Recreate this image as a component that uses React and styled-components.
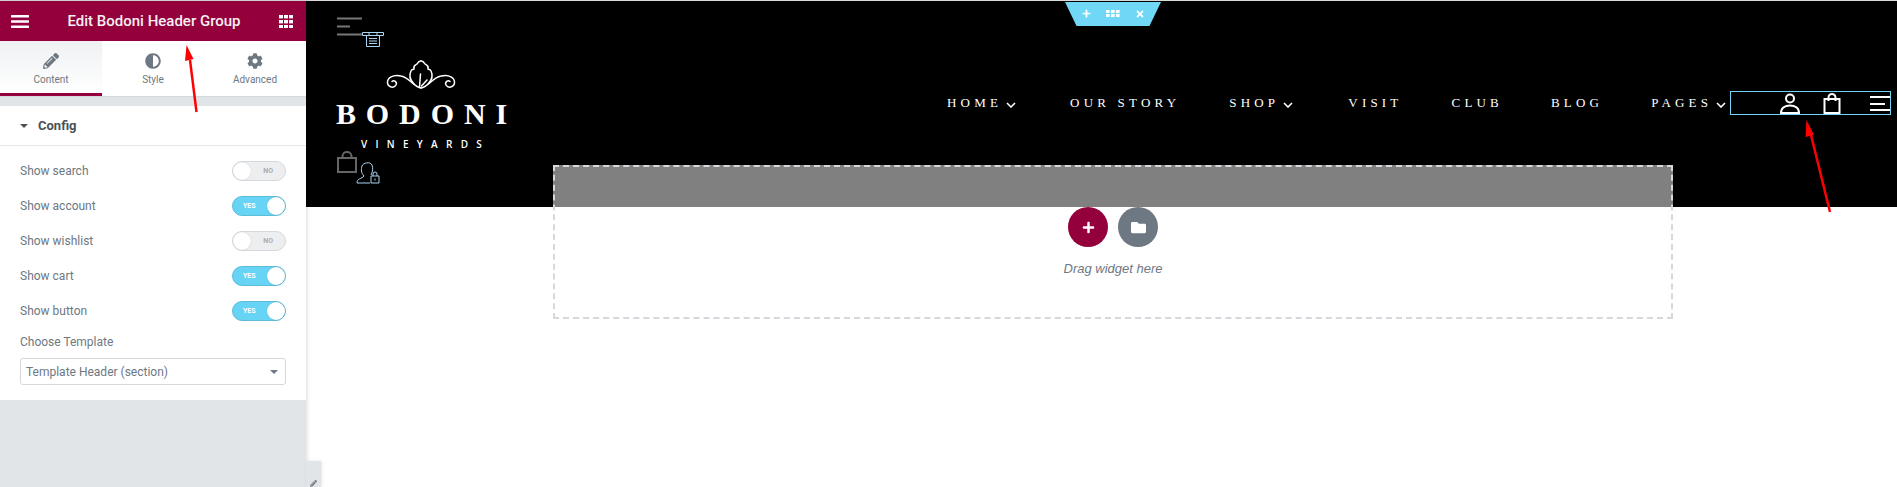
import styled, { createGlobalStyle } from 'styled-components'
import { FaAdjust, FaCog, FaFolder, FaPencilAlt, FaPlus, FaTimes } from 'react-icons/fa'

const EstiloGlobal = createGlobalStyle`
  html, body {
    margin: 0;
    height: 100%;
    overflow: hidden;
    background: #fff;
  }

  * {
    box-sizing: border-box;
  }
`

const Pagina = styled.div`
  position: relative;
  display: flex;
  height: 100vh;
  border-top: 1px solid #d8dadc;
  font-family: Roboto, "Liberation Sans", sans-serif;
`

/* painel lateral */
const Painel = styled.aside`
  position: relative;
  z-index: 3;
  flex: 0 0 306px;
  display: flex;
  flex-direction: column;
  background: #e2e5e8;
  box-shadow: 1px 0 4px rgba(0, 0, 0, .14);
`

const PainelTopo = styled.header`
  height: 40px;
  flex: none;
  display: flex;
  align-items: center;
  justify-content: space-between;
  padding: 0 13px 0 11px;
  background: #93003c;
  color: #fff;

  & > h1 {
    margin: 0;
    font-size: 15px;
    font-weight: 500;
    color: #f5f0f2;
  }
`

const Abas = styled.nav`
  height: 55px;
  flex: none;
  display: grid;
  grid-template-columns: repeat(3, 102px);
  background: #fff;
`

const Aba = styled.div`
  display: flex;
  flex-direction: column;
  align-items: center;
  padding-top: 12px;
  gap: 5px;
  font-size: 10px;
  color: #6d7882;
  background: ${props => props.$ativa ? 'linear-gradient(to bottom, #eff1f3, #fff)' : '#fff'};
  border-bottom: ${props => props.$ativa ? '3px solid #93003c' : '0'};
  box-shadow: 0 1px 1px rgba(0, 0, 0, .05);

  & > svg {
    height: 16px;
    width: 16px;
  }
`

const Secao = styled.section`
  margin-top: 10px;
  padding-bottom: 15px;
  flex: none;
  background: #fff;
`

const SecaoTitulo = styled.div`
  height: 40px;
  display: flex;
  align-items: center;
  gap: 10px;
  padding-left: 20px;
  border-bottom: 1px solid #e6e9ec;
  font-size: 13px;
  font-weight: 700;
  color: #495157;

  &::before {
    content: "";
    border-top: 4px solid #495157;
    border-left: 4px solid transparent;
    border-right: 4px solid transparent;
  }
`

const Campos = styled.div`
  padding: 7px 20px 0;
`

const Linha = styled.div`
  height: 35px;
  display: flex;
  align-items: center;
  justify-content: space-between;
  font-size: 12px;
  color: #6d7882;
`

const Chave = styled.span`
  position: relative;
  width: 54px;
  height: 20px;
  display: flex;
  align-items: center;
  justify-content: ${props => props.$ligada ? 'flex-start' : 'flex-end'};
  padding: ${props => props.$ligada ? '0 0 0 10px' : '0 12px 0 0'};
  border-radius: 10px;
  border: 1px solid ${props => props.$ligada ? '#5fbcd9' : '#d5d8dc'};
  background: ${props => props.$ligada ? '#67d3f5' : '#eceeef'};
  font-size: 7px;
  font-weight: 700;
  color: ${props => props.$ligada ? '#fff' : '#a4afb7'};

  &::after {
    content: "";
    position: absolute;
    top: 0;
    bottom: 0;
    width: 18px;
    border-radius: 50%;
    background: #fff;
    box-shadow: 0 0 1px rgba(0, 0, 0, .25);
    ${props => props.$ligada ? 'right: 0;' : 'left: 0;'}
  }
`

const Rotulo = styled.div`
  margin-top: 7px;
  font-size: 12px;
  line-height: 14px;
  color: #6d7882;
`

const Seletor = styled.div`
  height: 27px;
  margin-top: 9px;
  display: flex;
  align-items: center;
  justify-content: space-between;
  padding: 0 7px 0 5px;
  border: 1px solid #d5d8dc;
  border-radius: 3px;
  font-size: 12px;
  color: #6d7882;

  &::after {
    content: "";
    border-top: 4px solid #6d7882;
    border-left: 4px solid transparent;
    border-right: 4px solid transparent;
  }
`

const Recolher = styled.div`
  position: absolute;
  left: 306px;
  bottom: 0;
  width: 15px;
  height: 26px;
  background: #e2e5e8;
  box-shadow: 1px 0 3px rgba(0, 0, 0, .1);
  color: #6d7882;
  display: flex;
  justify-content: center;
  align-items: flex-end;
`

/* area do site */
const Tela = styled.main`
  flex: 1;
  min-width: 0;
`

const Cabecalho = styled.div`
  height: 206px;
  display: flex;
  padding-left: 31px;
  background: #000;
`

const ColunaLogo = styled.div`
  width: 610px;
  flex: none;
  padding-top: 16px;
`

const Marca = styled.div`
  margin-top: 12px;
  width: 172px;
  display: flex;
  flex-direction: column;
  align-items: center;
  color: #fff;

  & > svg {
    margin-right: 5px;
  }
`

const MarcaNome = styled.div`
  margin-top: 11px;
  margin-right: -7px;
  font-family: "Liberation Serif", serif;
  font-weight: 700;
  font-size: 30px;
  line-height: 28px;
  letter-spacing: 9.9px;
  white-space: nowrap;
`

const MarcaSub = styled.div`
  margin-top: 9px;
  margin-right: -5px;
  font-family: "Open Sans", sans-serif;
  font-size: 10px;
  font-weight: 600;
  line-height: 14px;
  letter-spacing: 8.3px;
  white-space: nowrap;
`

const LinhaIcones = styled.div`
  display: flex;
  align-items: flex-end;
`

const Menu = styled.nav`
  flex: 1;
  min-width: 0;
  height: 24px;
  margin-top: 90px;
  display: flex;
  align-items: center;
`

const ItemMenu = styled.a`
  flex: none;
  display: flex;
  align-items: center;
  margin-right: ${props => props.$recuo}px;
  font-family: "Liberation Serif", serif;
  font-size: 13px;
  letter-spacing: 4.2px;
  color: #fff;
  white-space: nowrap;

  & > svg {
    margin: 4px 0 0 4px;
  }
`

const CaixaIcones = styled.div`
  flex: none;
  width: 161px;
  height: 24px;
  margin-left: auto;
  margin-right: 6px;
  display: flex;
  align-items: flex-end;
  justify-content: flex-end;
  gap: 29px;
  border: 1px solid #71d7f7;

  & > svg:first-child {
    margin-right: -6px;
  }
`

const Hamburguer = styled.span`
  display: flex;
  flex-direction: column;
  align-items: flex-start;
  gap: 4.5px;
  margin-bottom: 3px;

  & > i {
    display: block;
    height: 2px;
    width: ${props => props.$largura}px;
    background: #fff;
  }

  & > i:nth-child(2) {
    width: 15px;
  }
`

const Alca = styled.div`
  position: absolute;
  top: 1px;
  left: 1065px;
  width: 96px;
  height: 24px;
  display: flex;
  align-items: center;
  justify-content: center;
  gap: 15px;
  padding-bottom: 1px;
  background: #71d7f7;
  clip-path: polygon(0 0, 100% 0, 88% 100%, 12% 100%);
  color: #fff;
  z-index: 2;
`

const ZonaSoltar = styled.div`
  position: relative;
  width: 1120px;
  height: 154px;
  margin: -42px 0 0 247px;
  padding-top: 40px;
  border: 2px dashed #d5d8dc;
  background: rgba(255, 255, 255, .5);
  display: flex;
  flex-direction: column;
  align-items: center;
`

const Botoes = styled.div`
  display: flex;
  gap: 10px;
`

const BotaoRedondo = styled.span`
  width: 40px;
  height: 40px;
  border-radius: 50%;
  display: flex;
  align-items: center;
  justify-content: center;
  background: ${props => props.$cor};
  color: #fff;
`

const Dica = styled.div`
  margin-top: 14px;
  font-family: "Liberation Sans", sans-serif;
  font-size: 13px;
  font-style: italic;
  color: #6d7882;
`

const Seta = styled.svg`
  position: absolute;
  top: 0;
  left: 0;
  width: 100%;
  height: 100%;
  z-index: 5;
  pointer-events: none;
`

const Barras = () => (
  <svg width="18" height="13" viewBox="0 0 18 13" fill="#fff">
    <rect width="18" height="2.6" rx=".5" />
    <rect y="5.2" width="18" height="2.6" rx=".5" />
    <rect y="10.4" width="18" height="2.6" rx=".5" />
  </svg>
)

const Grade = () => (
  <svg width="14" height="13" viewBox="0 0 14 13" fill="#fff">
    {[0, 5, 10].map(x => [0, 5, 10].map(y => (
      <rect key={`${x}-${y}`} x={x} y={y} width="4" height="3.4" />
    )))}
  </svg>
)

const Pontos = () => (
  <svg width="14" height="7" viewBox="0 0 14 7" fill="#fff">
    {[0, 5, 10].map(x => [0, 4].map(y => (
      <rect key={`${x}-${y}`} x={x} y={y} width="3.6" height="3" />
    )))}
  </svg>
)

const Divisa = () => (
  <svg width="10" height="6" viewBox="0 0 10 6" fill="none" stroke="#fff" strokeWidth="1.6">
    <path d="M1 1l4 4 4-4" />
  </svg>
)

const IconeCabecalho = () => (
  <svg width="48" height="31" viewBox="0 0 48 31" fill="none" style={{ display: 'block' }}>
    <path d="M0 1.5h25M0 9.5h13M0 17.5h25" stroke="#777" strokeWidth="2" />
    <path d="M25.5 15.5h21v3h-21zM32 15.5v3M40 15.5v3M29.5 18.5v11h13v-11M32 21.5h8M32 24h8M32 26.5h8" stroke="#a9d4f2" strokeWidth="1" />
  </svg>
)

const Ornamento = () => (
  <svg width="70" height="29" viewBox="0 0 70 29" fill="none" stroke="#fff" strokeWidth="1.5" strokeLinecap="round">
    <path d="M35 28C28 27 24 18 15 16C7 14 1 18 1.500 23C2 27.500 8 28.500 10 25C11.500 22 8 19.500 6 21.500" />
    <path d="M35 28C42 27 46 18 55 16C63 14 69 18 68.500 23C68 27.500 62 28.500 60 25C58.500 22 62 19.500 64 21.500" />
    <path d="M28 24C24 20 23 15 25 11C26 9 27 10 28 9C27 5 30 5 31 4C32 2 34 1 35 .8C36 1 38 2 39 4C40 5 43 5 42 9C43 10 44 9 45 11C47 15 46 20 42 24" />
    <path d="M33.500 27L34.500 14M35.500 26L41 20" />
  </svg>
)

const IconeSacola = () => (
  <svg width="20" height="22" viewBox="0 0 20 22" fill="none" stroke="#666" strokeWidth="2" style={{ flex: 'none' }}>
    <path d="M1 7h18v14H1zM5.500 7V5a4.500 4 0 0 1 9 0v2" />
  </svg>
)

const IconeContaTrava = () => (
  <svg width="24" height="23" viewBox="0 0 24 23" fill="none" stroke="#a9d4f2" strokeWidth="1" style={{ flex: 'none', marginLeft: '-1px', marginBottom: '-11px' }}>
    <path d="M1 22c0-5 5-4 7-7-3-3-3-7-2-10 1-3 8-5 10-1 1 3 1 6-1 10M1 22h13" />
    <path d="M15 15h8v7h-8zM17 15v-2a2 2 0 0 1 4 0v2M19 17.500v2" />
  </svg>
)

const IconeConta = () => (
  <svg width="20" height="21" viewBox="0 0 20 21" fill="none" stroke="#fff" strokeWidth="2">
    <circle cx="10" cy="5.500" r="4" />
    <path d="M1 20c0-5 4-7.500 9-7.500s9 2.500 9 7.500z" />
  </svg>
)

const IconeBolsa = () => (
  <svg width="18" height="21" viewBox="0 0 18 21" fill="none" stroke="#fff" strokeWidth="2">
    <path d="M1.500 6h15v14h-15zM5.500 8V4.500a3.500 3.500 0 0 1 7 0V8" />
  </svg>
)

const CAMPOS = [
  ['Show search', false],
  ['Show account', true],
  ['Show wishlist', false],
  ['Show cart', true],
  ['Show button', true],
]

const ITENS = [
  ['HOME', true, 54],
  ['OUR STORY', false, 49],
  ['SHOP', true, 55],
  ['VISIT', false, 49],
  ['CLUB', false, 48],
  ['BLOG', false, 48],
  ['PAGES', true, 0],
]

const App = () => (
  <Pagina>
    <EstiloGlobal />

    <Painel>
      <PainelTopo>
        <Barras />
        <h1>Edit Bodoni Header Group</h1>
        <Grade />
      </PainelTopo>

      <Abas>
        <Aba $ativa><FaPencilAlt />Content</Aba>
        <Aba><FaAdjust />Style</Aba>
        <Aba><FaCog />Advanced</Aba>
      </Abas>

      <Secao>
        <SecaoTitulo>Config</SecaoTitulo>
        <Campos>
          {CAMPOS.map(([nome, ligada]) => (
            <Linha key={nome}>
              {nome}
              <Chave $ligada={ligada}>{ligada ? 'YES' : 'NO'}</Chave>
            </Linha>
          ))}
          <Rotulo>Choose Template</Rotulo>
          <Seletor>Template Header (section)</Seletor>
        </Campos>
      </Secao>

      <Recolher>
        <FaPencilAlt size={7} />
      </Recolher>
    </Painel>

    <Tela>
      <Cabecalho>
        <ColunaLogo>
          <IconeCabecalho />
          <Marca>
            <Ornamento />
            <MarcaNome>BODONI</MarcaNome>
            <MarcaSub>VINEYARDS</MarcaSub>
          </Marca>
          <LinhaIcones>
            <IconeSacola />
            <IconeContaTrava />
          </LinhaIcones>
        </ColunaLogo>

        <Menu>
          {ITENS.map(([nome, divisa, recuo]) => (
            <ItemMenu key={nome} $recuo={recuo}>
              {nome}
              {divisa && <Divisa />}
            </ItemMenu>
          ))}
          <CaixaIcones>
            <IconeConta />
            <IconeBolsa />
            <Hamburguer $largura={20}><i /><i /><i /></Hamburguer>
          </CaixaIcones>
        </Menu>
      </Cabecalho>

      <ZonaSoltar>
        <Botoes>
          <BotaoRedondo $cor="#93003c"><FaPlus size={13} /></BotaoRedondo>
          <BotaoRedondo $cor="#6d7882"><FaFolder size={15} /></BotaoRedondo>
        </Botoes>
        <Dica>Drag widget here</Dica>
      </ZonaSoltar>
    </Tela>

    <Alca>
      <FaPlus size={9} />
      <Pontos />
      <FaTimes size={10} />
    </Alca>

    <Seta viewBox="0 0 1897 486" preserveAspectRatio="xMinYMin slice">
      <path d="M196.500 111L190 59" stroke="#f00" strokeWidth="2.500" />
      <path d="M186.500 44L193.500 58L185 60z" fill="#f00" />
      <path d="M1830 211L1811 134" stroke="#f00" strokeWidth="2.500" />
      <path d="M1806.500 119L1814 134L1805.500 136z" fill="#f00" />
    </Seta>
  </Pagina>
)

export default App
